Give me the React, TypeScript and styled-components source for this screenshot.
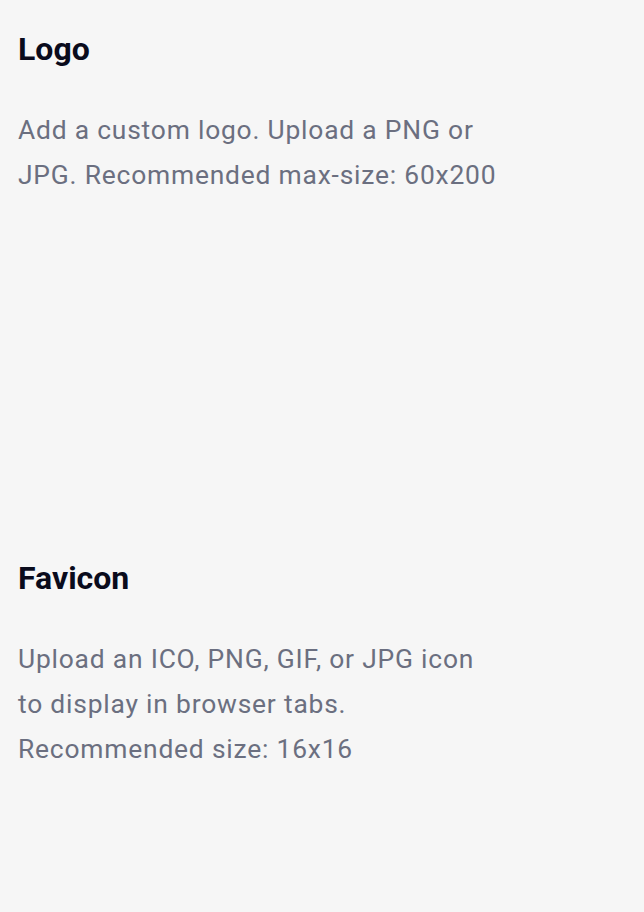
import React from "react";
import styled, { createGlobalStyle } from "styled-components";

const GlobalStyle = createGlobalStyle`
  html, body {
    margin: 0;
    padding: 0;
    background: #f6f6f6;
    font-family: Roboto, "Liberation Sans", sans-serif;
  }
`;

const Page = styled.div`
  display: flex;
  flex-direction: column;
  padding: 31px 18px 0 18px;
  min-height: 912px;
  box-sizing: border-box;
  background: #f6f6f6;
`;

const Section = styled.section<{ $minHeight: number }>`
  display: flex;
  flex-direction: column;
  gap: 41px;
  width: 484px;
  min-height: ${(p) => p.$minHeight}px;
`;

const Heading = styled.h2`
  margin: 0;
  font-size: 32px;
  line-height: 36px;
  font-weight: 700;
  color: #0a0b1c;
`;

const Description = styled.p`
  margin: 0;
  font-size: 26.4px;
  line-height: 45px;
  letter-spacing: 0.8px;
  font-weight: 400;
  color: #6b6f80;
`;

export default function App() {
  return (
    <>
      <GlobalStyle />
      <Page>
        <Section $minHeight={529}>
          <Heading>Logo</Heading>
          <Description>
            Add a custom logo. Upload a PNG or JPG. Recommended max-size: 60x200
          </Description>
        </Section>
        <Section $minHeight={300}>
          <Heading>Favicon</Heading>
          <Description>
            Upload an ICO, PNG, GIF, or JPG icon to display in browser tabs.
            Recommended size: 16x16
          </Description>
        </Section>
      </Page>
    </>
  );
}
